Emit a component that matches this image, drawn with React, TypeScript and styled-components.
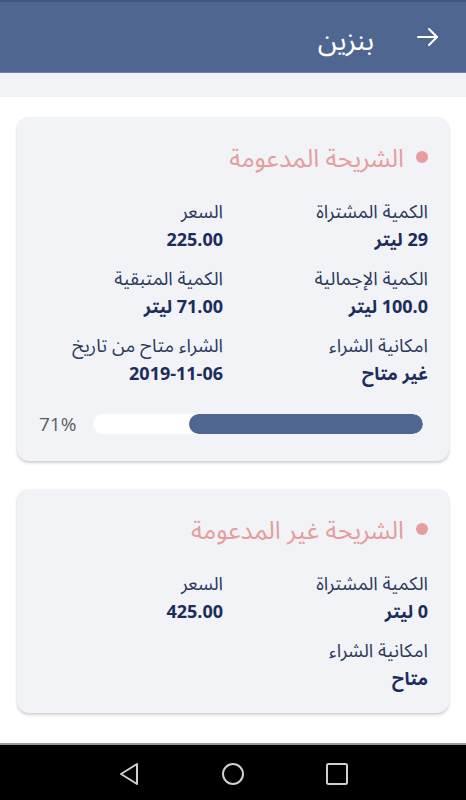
import React from "react";
import styled, { createGlobalStyle } from "styled-components";

const Global = createGlobalStyle`
  html, body { margin: 0; padding: 0; background: #ffffff; }
  body { font-family: "Open Sans", "Noto Sans Arabic", "DejaVu Sans", sans-serif; }
  * { box-sizing: border-box; }
`;

const Screen = styled.div`
  width: 466px;
  height: 800px;
  display: flex;
  flex-direction: column;
  direction: rtl;
  background: #ffffff;
  overflow: hidden;
`;

const Header = styled.header`
  height: 73px;
  flex: none;
  background: #4e6690;
  border-top: 2px solid #3f5680;
  border-bottom: 1px solid #7084a8;
  display: flex;
  align-items: center;
  gap: 42px;
  padding: 0 26px 0 0;
  color: #ffffff;
`;

const HeaderTitle = styled.h1`
  margin: 0;
  font-size: 28px;
  font-weight: 400;
  line-height: 1;
  padding-top: 4px;
`;

const Strip = styled.div`
  height: 24px;
  flex: none;
  background: #f1f3f7;
`;

const Content = styled.main`
  flex: 1;
  display: flex;
  flex-direction: column;
  gap: 28px;
  padding: 20px 17px 0 17px;
`;

const Card = styled.section`
  background: #f1f3f7;
  border-radius: 12px;
  box-shadow: 0 2px 3px rgba(0, 0, 0, 0.18), 0 0 1px rgba(0, 0, 0, 0.08);
  padding: 24px 21px 21px 22px;
`;

const CardTitle = styled.h2`
  margin: 0 0 24px 0;
  display: flex;
  align-items: center;
  gap: 12px;
  font-size: 25px;
  font-weight: 400;
  color: #e59d9d;
  line-height: 32px;
`;

const Dot = styled.span`
  width: 12px;
  height: 12px;
  border-radius: 50%;
  background: #e59d9d;
  flex: none;
`;

const Grid = styled.div`
  display: grid;
  grid-template-columns: 205px 1fr;
  row-gap: 11px;
`;

const Field = styled.div`
  display: flex;
  flex-direction: column;
`;

const Label = styled.div`
  font-size: 18.6px;
  color: #2b3a5c;
  line-height: 28px;
`;

const Value = styled.div`
  font-size: 18px;
  font-weight: 700;
  color: #1c2d5c;
  line-height: 28px;
`;

const ProgressRow = styled.div`
  margin: 25px 0 4px 0;
  display: flex;
  align-items: center;
  gap: 17px;
  padding-right: 5px;
`;

const Track = styled.div`
  flex: 1;
  height: 20px;
  border-radius: 10px;
  background: #ffffff;
  overflow: hidden;
  display: flex;
`;

const Fill = styled.div`
  height: 100%;
  border-radius: 10px;
  background: #4e6690;
`;

const Percent = styled.span`
  font-family: "Open Sans", "Noto Sans", sans-serif;
  font-size: 19px;
  color: #5a5e64;
  direction: ltr;
  line-height: 24px;
`;

const NavBar = styled.nav`
  height: 57px;
  flex: none;
  background: #000000;
  border-top: 2px solid #9a9a9a;
  direction: ltr;
  display: flex;
  align-items: center;
  justify-content: center;
  gap: 80px;
  padding-top: 2px;
`;

const NavIcon = styled.svg`
  width: 24px;
  height: 24px;
  display: block;
`;

type Item = { label: string; value: string };

const Info = ({ label, value }: Item) => (
  <Field>
    <Label>{label}</Label>
    <Value>{value}</Value>
  </Field>
);

const ArrowIcon = () => (
  <svg width="24" height="24" viewBox="0 0 24 24" fill="none" stroke="#fff" strokeWidth="2" strokeLinecap="round" strokeLinejoin="round">
    <path d="M2 12h19" />
    <path d="M13 4l8 8-8 8" />
  </svg>
);

export default function App() {
  const pct = 71;
  return (
    <Screen>
      <Global />
      <Header>
        <ArrowIcon />
        <HeaderTitle>بنزين</HeaderTitle>
      </Header>
      <Strip />
      <Content>
        <Card>
          <CardTitle>
            <Dot />
            الشريحة المدعومة
          </CardTitle>
          <Grid>
            <Info label="الكمية المشتراة" value="29 ليتر" />
            <Info label="السعر" value="225.00" />
            <Info label="الكمية الإجمالية" value="100.0 ليتر" />
            <Info label="الكمية المتبقية" value="71.00 ليتر" />
            <Info label="امكانية الشراء" value="غير متاح" />
            <Info label="الشراء متاح من تاريخ" value="2019-11-06" />
          </Grid>
          <ProgressRow>
            <Track>
              <Fill style={{ width: `${pct}%` }} />
            </Track>
            <Percent>{pct}%</Percent>
          </ProgressRow>
        </Card>
        <Card>
          <CardTitle>
            <Dot />
            الشريحة غير المدعومة
          </CardTitle>
          <Grid>
            <Info label="الكمية المشتراة" value="0 ليتر" />
            <Info label="السعر" value="425.00" />
            <Info label="امكانية الشراء" value="متاح" />
          </Grid>
        </Card>
      </Content>
      <NavBar>
        <NavIcon viewBox="0 0 24 24" fill="none" stroke="#cfcfcf" strokeWidth="2" strokeLinejoin="round">
          <path d="M20 2L4 12l16 10z" />
        </NavIcon>
        <NavIcon viewBox="0 0 24 24" fill="none" stroke="#cfcfcf" strokeWidth="2">
          <circle cx="12" cy="12" r="10" />
        </NavIcon>
        <NavIcon viewBox="0 0 24 24" fill="none" stroke="#cfcfcf" strokeWidth="2">
          <rect x="2" y="2" width="20" height="20" rx="1.5" />
        </NavIcon>
      </NavBar>
    </Screen>
  );
}
